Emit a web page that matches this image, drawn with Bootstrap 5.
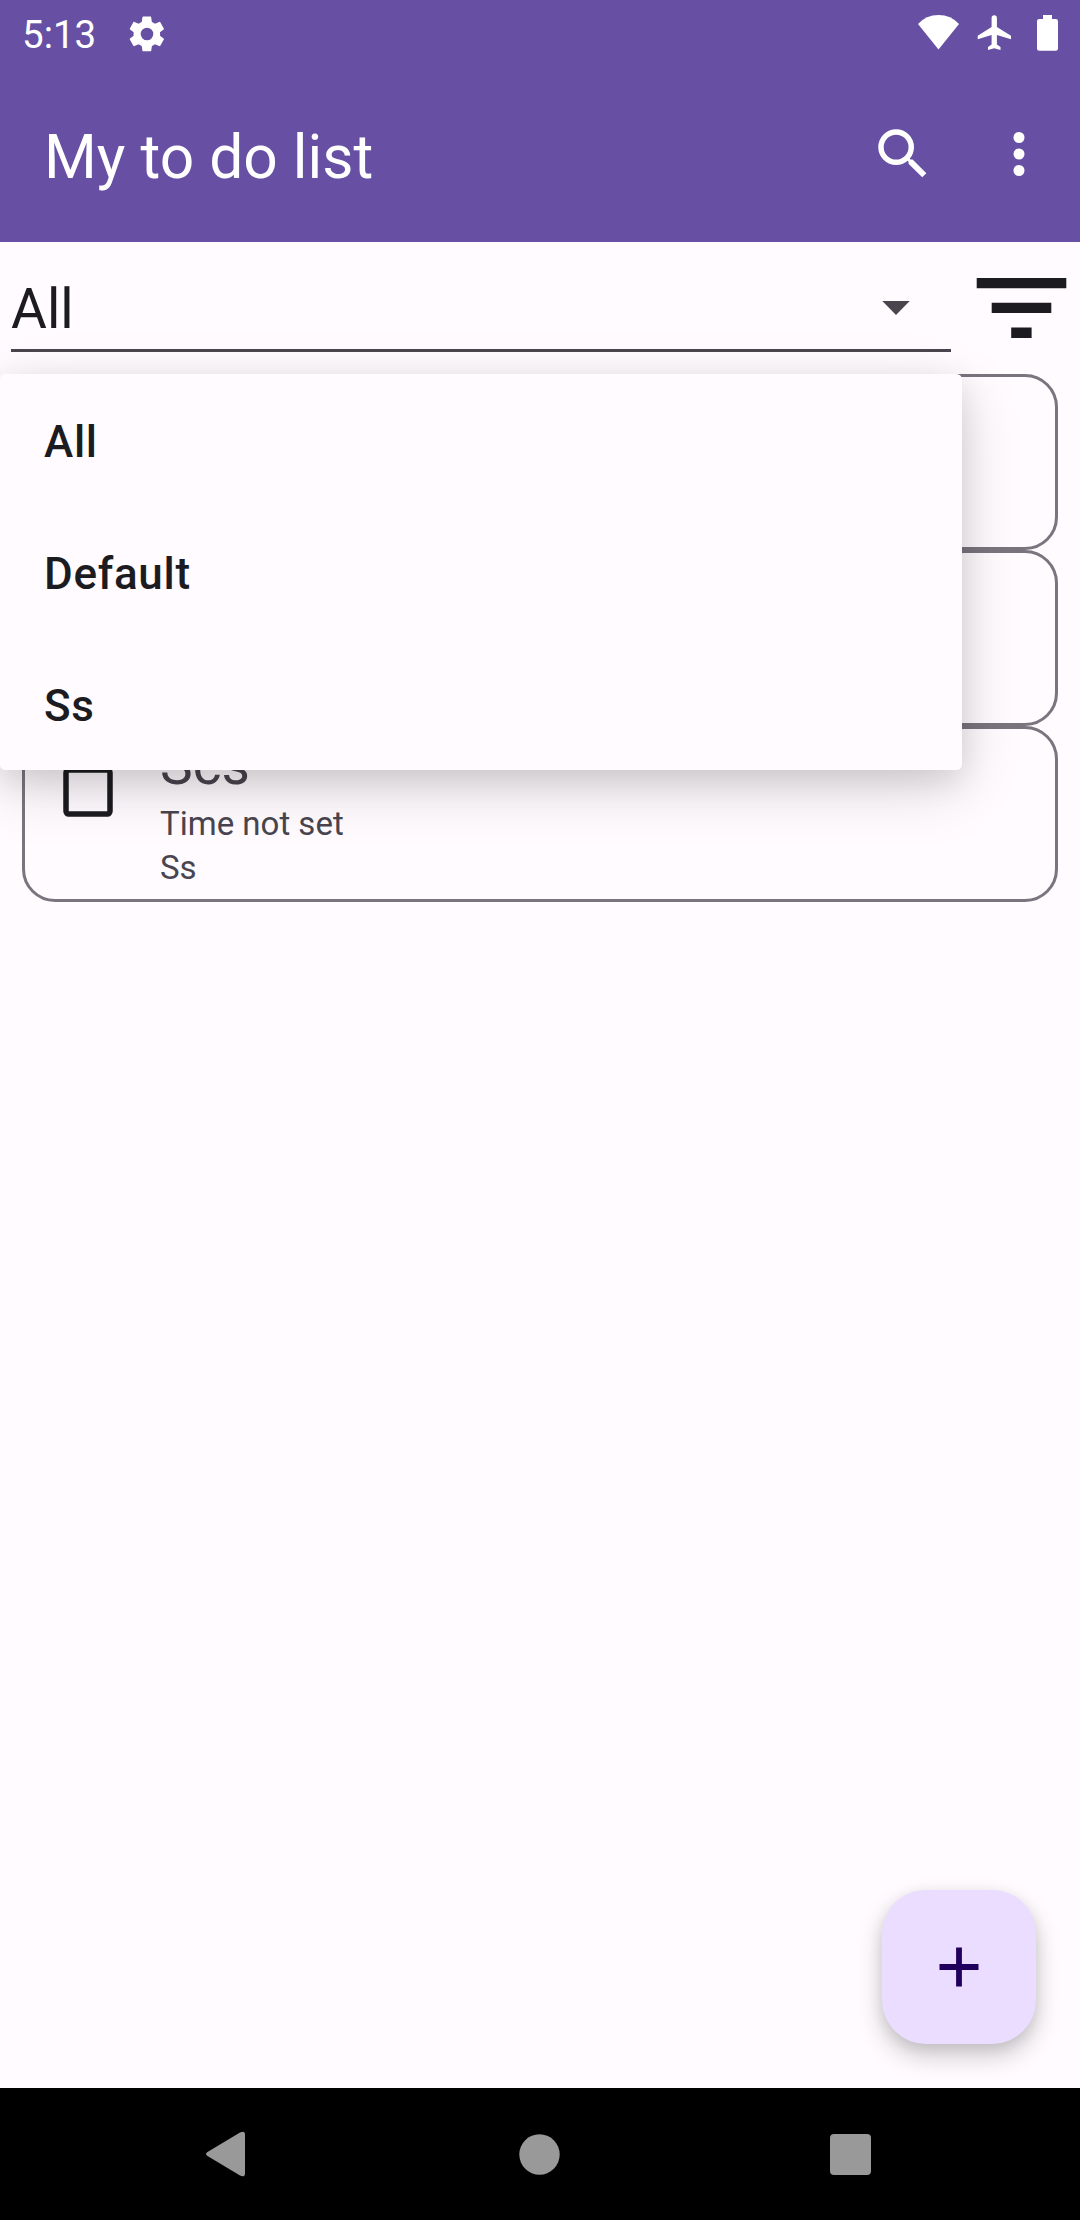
<!DOCTYPE html>
<html lang="en">
<head>
<meta charset="utf-8">
<meta name="viewport" content="width=device-width, initial-scale=1">
<title>My to do list</title>
<link href="https://cdn.jsdelivr.net/npm/bootstrap@5.3.0/dist/css/bootstrap.min.css" rel="stylesheet">
<style>
  body { font-family: Roboto, "Noto Sans", sans-serif; background: #fffbff; color: #1c1b1f; }
  svg { display: block; flex: none; }
  .screen { width: 1080px; height: 2220px; }
  .top-area { background: #6750a4; }
  .status-bar { height: 66px; padding: 0 22px 0 22px; }
  .status-time { font-size: 38.5px; line-height: 66px; padding-top: 2px; margin-right: 29.5px; }
  .status-gear { margin-top: 12.5px; }
  .app-bar { height: 176px; padding: 0 28px 0 44px; }
  .app-title { font-size: 60.5px; line-height: 72px; padding-top: 8px; }
  .search-icon { margin-right: 50px; }
  .filter-row { height: 132px; }
  .spinner-field { flex: none; width: 940px; margin-left: 11px; height: 110px; border-bottom: 3px solid #49454f; padding: 26px 41px 0 0; font-size: 55px; line-height: 84px; }
  .spinner-arrow { margin-top: -2px; }
  .filter-btn { width: 118px; margin-left: 11px; }
  .todo-list { padding: 0 22px; }
  .todo-card { height: 176px; border: 3px solid #79747e; border-radius: 33px; background: #fffbff; }
  .check-box { margin: 38px 0 0 38px; }
  .todo-text { margin-left: 47px; color: #49454f; font-size: 33px; line-height: 44px; }
  .todo-name { font-size: 55px; line-height: 73px; }
  .drop-list { top: 132px; left: 0; width: 962px; background: #fffbff; border-radius: 5.5px; z-index: 5;
    box-shadow: 0 18px 62px rgba(0,0,0,.15), 0 10px 32px rgba(0,0,0,.10); }
  .drop-item { height: 132px; padding: 4px 44px 0; font-size: 44px; font-weight: 500; letter-spacing: .7px; }
  .fab { right: 44px; bottom: 44px; width: 154px; height: 154px; border-radius: 44px; background: #eaddff; border: 0;
    box-shadow: 0 12px 26px rgba(0,0,0,.20), 0 4px 14px rgba(0,0,0,.09); }
  .nav-keys { height: 132px; background: #000; padding: 0 209px 0 206px; z-index: 6; }
  .home-key { margin-left: 4px; }
</style>
</head>
<body>
<div class="screen d-flex flex-column overflow-hidden">
  <header class="top-area text-white">
    <div class="status-bar d-flex align-items-start">
      <div class="status-time">5:13</div>
      <svg class="status-gear" width="42" height="42" viewBox="0 0 24 24" fill="#fff"><path d="M19.4 13c0-.3.1-.6.1-1s0-.7-.1-1l2.1-1.6c.2-.2.2-.4.1-.6l-2-3.5c-.1-.2-.4-.3-.6-.2l-2.5 1c-.5-.4-1.100-.7-1.700-1l-.4-2.600c0-.2-.2-.5-.5-.5h-4c-.2 0-.5.2-.5.4l-.4 2.700c-.6.2-1.200.6-1.700 1l-2.500-1c-.2-.1-.5 0-.6.2l-2 3.500c-.1.2-.1.500.1.600l2.100 1.600c0 .3-.1.600-.1 1s0 .7.1 1l-2.100 1.600c-.2.200-.2.400-.1.600l2 3.500c.1.200.4.300.6.200l2.500-1c.5.400 1.100.7 1.700 1l.4 2.600c0 .2.200.4.5.4h4c.2 0 .5-.2.500-.4l.4-2.600c.6-.3 1.200-.6 1.700-1l2.500 1c.2.100.5 0 .6-.2l2-3.500c.1-.2.100-.5-.1-.6zM12 15.600a3.600 3.600 0 1 1 0-7.200 3.600 3.600 0 0 1 0 7.200z"/></svg>
      <svg class="ms-auto" width="140" height="66" viewBox="918 0 140 66" fill="#fff"><path d="M918 24Q926 15 938.500 15T959 24L938.500 49.500z"/><path d="M1011 39.300v-3.500l-14.100-8.800V18a2.650 2.650 0 0 0-5.300 0v9l-13.900 8.800v3.500l13.900-4.200v9.300l-3.600 2.700v2.800l6.200-1.700 6.300 1.700v-2.800l-3.600-2.700v-9.300z"/><path d="M1043 19v-4h9v4h3.800a2.200 2.200 0 0 1 2.200 2.200v27.300a2.200 2.200 0 0 1-2.200 2.200h-16.600a2.200 2.200 0 0 1-2.200-2.200V21.200a2.200 2.200 0 0 1 2.200-2.200z"/></svg>
    </div>
    <div class="app-bar d-flex align-items-center">
      <div class="app-title me-auto">My to do list</div>
      <svg class="search-icon" width="66" height="66" viewBox="0 0 24 24" fill="#fff"><path d="M15.500 14h-.79l-.28-.27A6.470 6.470 0 0 0 16 9.500 6.500 6.500 0 1 0 9.500 16c1.610 0 3.090-.59 4.230-1.570l.27.280v.79l5 4.990L20.490 19zM9.500 14a4.500 4.500 0 1 1 0-9 4.500 4.500 0 0 1 0 9z"/></svg>
      <svg width="66" height="66" viewBox="0 0 24 24" fill="#fff"><circle cx="12" cy="6" r="2"/><circle cx="12" cy="12" r="2"/><circle cx="12" cy="18" r="2"/></svg>
    </div>
  </header>

  <main class="flex-grow-1 position-relative">
    <div class="filter-row d-flex align-items-start">
      <div class="spinner-field d-flex align-items-center justify-content-between">
        <span>All</span>
        <svg class="spinner-arrow" width="28" height="14" viewBox="0 0 28 14" fill="#49454f"><path d="M.3 0h27.400L14 14z"/></svg>
      </div>
      <div class="filter-btn">
        <svg width="118" height="132" viewBox="962 242 118 132" fill="#1c1b1f"><path d="M976.700 277.900h89.600v10.400h-89.600zM991.700 302.700h59.600v10.400h-59.600zM1011.200 327.500h20.400v10.400h-20.400z"/></svg>
      </div>
    </div>

    <div class="drop-list position-absolute">
      <div class="drop-item d-flex align-items-center">All</div>
      <div class="drop-item d-flex align-items-center">Default</div>
      <div class="drop-item d-flex align-items-center">Ss</div>
    </div>

    <div class="todo-list d-flex flex-column">
      <div class="todo-card"></div>
      <div class="todo-card"></div>
      <div class="todo-card d-flex align-items-start">
        <svg class="check-box" width="50" height="50" viewBox="0 0 50 50" fill="none" stroke="#1c1b1f" stroke-width="5.500"><rect x="3" y="3" width="44" height="44" rx="2.700"/></svg>
        <div class="todo-text">
          <div class="todo-name">Scs</div>
          <div>Time not set</div>
          <div>Ss</div>
        </div>
      </div>
    </div>

    <button class="fab position-absolute d-flex align-items-center justify-content-center p-0" aria-label="Add">
      <svg width="40" height="40" viewBox="0 0 40 40" fill="#21005d"><path d="M17.100.500h5.800v16.600h16.600v5.800H22.900v16.600h-5.800V22.900H.500v-5.800h16.600z"/></svg>
    </button>
  </main>

  <nav class="nav-keys d-flex align-items-center justify-content-between">
    <svg width="39" height="46" viewBox="0 0 39 46" fill="#999"><path d="M34 1.500Q38.900-.8 39 3.500v39q-.1 4.300-5 2L1.500 25q-3-2 0-4z"/></svg>
    <svg class="home-key" width="41" height="41" viewBox="0 0 41 41" fill="#999"><circle cx="20.500" cy="20.500" r="20.200"/></svg>
    <svg width="41" height="41" viewBox="0 0 41 41" fill="#999"><rect width="41" height="41" rx="4"/></svg>
  </nav>
</div>
<script src="https://cdn.jsdelivr.net/npm/bootstrap@5.3.0/dist/js/bootstrap.bundle.min.js"></script>
</body>
</html>
